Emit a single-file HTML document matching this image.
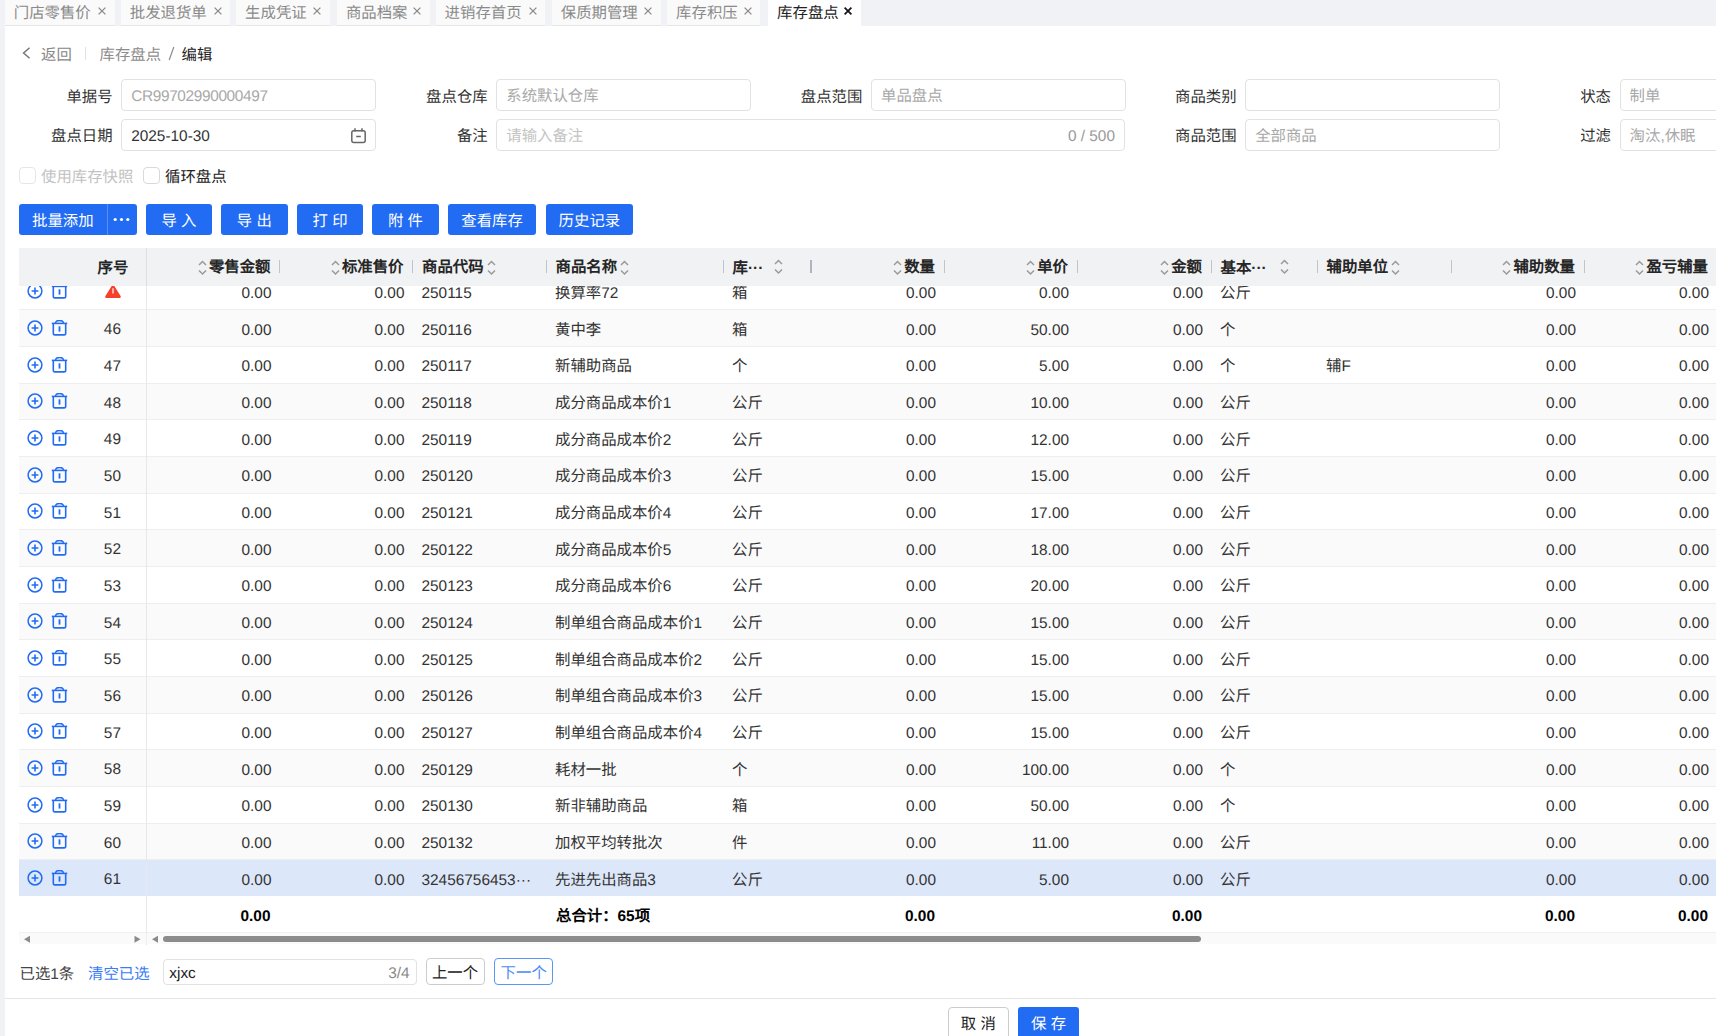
<!DOCTYPE html><html lang="zh-CN"><head><meta charset="utf-8"><style>
*{box-sizing:border-box;margin:0;padding:0}
html,body{width:1716px;height:1036px;overflow:hidden}
body{background:#f0f2f5;font-family:"Liberation Sans", sans-serif;font-size:15.4px;color:#333;position:relative;text-rendering:geometricPrecision}
.a{position:absolute;white-space:nowrap}
.tab{position:absolute;top:0;height:25.5px;background:#fafafa;border-bottom:1px solid #e6e6e6;color:#8a8a8a;line-height:27px;padding-left:8.8px}
.tab .x{position:absolute;right:8.5px;top:6.8px;width:8px;height:8px;line-height:0}
.panel{position:absolute;left:5px;top:25.5px;width:1711px;height:1010.5px;background:#fff}
.lbl{position:absolute;color:#333;line-height:35px;text-align:right}
.inp{position:absolute;height:31.3px;border:1px solid #e2e2e2;border-radius:4px;background:#fff;color:#a8a8a8;line-height:34.5px;padding-left:9px}
.btn{position:absolute;top:204px;height:31px;background:#226cf3;color:#fff;border-radius:3px;line-height:36px;text-align:center}
.cell{position:absolute;white-space:nowrap;line-height:20px;font-size:15.4px}
.r{text-align:right}
.hd{font-weight:bold;color:#262626;font-size:15.4px}
</style></head><body>
<div class="tab" style="left:5px;width:109.7px">门店零售价<span class="x"><svg width="8" height="8" viewBox="0 0 8 8"><path d="M0.6 0.6L7.4 7.4M7.4 0.6L0.6 7.4" stroke="#8a8a8a" stroke-width="1.3"/></svg></span></div>
<div class="tab" style="left:121px;width:109px">批发退货单<span class="x"><svg width="8" height="8" viewBox="0 0 8 8"><path d="M0.6 0.6L7.4 7.4M7.4 0.6L0.6 7.4" stroke="#8a8a8a" stroke-width="1.3"/></svg></span></div>
<div class="tab" style="left:236.3px;width:93.30000000000001px">生成凭证<span class="x"><svg width="8" height="8" viewBox="0 0 8 8"><path d="M0.6 0.6L7.4 7.4M7.4 0.6L0.6 7.4" stroke="#8a8a8a" stroke-width="1.3"/></svg></span></div>
<div class="tab" style="left:337.1px;width:92.89999999999998px">商品档案<span class="x"><svg width="8" height="8" viewBox="0 0 8 8"><path d="M0.6 0.6L7.4 7.4M7.4 0.6L0.6 7.4" stroke="#8a8a8a" stroke-width="1.3"/></svg></span></div>
<div class="tab" style="left:435.8px;width:109.59999999999997px">进销存首页<span class="x"><svg width="8" height="8" viewBox="0 0 8 8"><path d="M0.6 0.6L7.4 7.4M7.4 0.6L0.6 7.4" stroke="#8a8a8a" stroke-width="1.3"/></svg></span></div>
<div class="tab" style="left:552px;width:108.79999999999995px">保质期管理<span class="x"><svg width="8" height="8" viewBox="0 0 8 8"><path d="M0.6 0.6L7.4 7.4M7.4 0.6L0.6 7.4" stroke="#8a8a8a" stroke-width="1.3"/></svg></span></div>
<div class="tab" style="left:667.3px;width:93.10000000000002px">库存积压<span class="x"><svg width="8" height="8" viewBox="0 0 8 8"><path d="M0.6 0.6L7.4 7.4M7.4 0.6L0.6 7.4" stroke="#8a8a8a" stroke-width="1.3"/></svg></span></div>
<div class="tab" style="left:768.3px;width:92.6px;background:#fff;border-bottom:none;color:#222">库存盘点<span class="x"><svg width="8" height="8" viewBox="0 0 8 8"><path d="M0.6 0.6L7.4 7.4M7.4 0.6L0.6 7.4" stroke="#111" stroke-width="1.7"/></svg></span></div>
<div class="panel"></div>
<svg class="a" style="left:22px;top:47px" width="9" height="12" viewBox="0 0 9 12"><path d="M7.6 0.8 L1.6 6 L7.6 11.2" fill="none" stroke="#777" stroke-width="1.5"/></svg>
<div class="a" style="left:41px;top:45.5px;line-height:20px;color:#888">返回</div>
<div class="a" style="left:85.3px;top:47px;width:1px;height:13px;background:#e2e2e2"></div>
<div class="a" style="left:99.5px;top:45.5px;line-height:20px;color:#8c8c8c">库存盘点</div>
<svg class="a" style="left:167px;top:46px" width="9" height="15" viewBox="0 0 9 15"><path d="M6.8 1 L2.2 14" stroke="#8c8c8c" stroke-width="1.2"/></svg>
<div class="a" style="left:181.5px;top:45.5px;line-height:20px;color:#222;font-weight:500">编辑</div>
<div class="lbl" style="left:-87.39999999999999px;width:200px;top:79.7px">单据号</div>
<div class="inp" style="left:121.2px;top:79.4px;width:254.5px"><span style="letter-spacing:-0.35px">CR99702990000497</span></div>
<div class="lbl" style="left:287.70000000000005px;width:200px;top:79.7px">盘点仓库</div>
<div class="inp" style="left:496.3px;top:79.4px;width:254.5px">系统默认仓库</div>
<div class="lbl" style="left:662.4px;width:200px;top:79.7px">盘点范围</div>
<div class="inp" style="left:871px;top:79.4px;width:254.5px">单品盘点</div>
<div class="lbl" style="left:1036.6000000000001px;width:200px;top:79.7px">商品类别</div>
<div class="inp" style="left:1245.2px;top:79.4px;width:254.5px"></div>
<div class="lbl" style="left:1411.0px;width:200px;top:79.7px">状态</div>
<div class="inp" style="left:1619.6px;top:79.4px;width:254.5px">制单</div>
<div class="lbl" style="left:-87.39999999999999px;width:200px;top:119.4px">盘点日期</div>
<div class="inp" style="left:121.2px;top:119.4px;width:254.5px;color:#333">2025-10-30</div>
<svg class="a" style="left:350px;top:126.5px" width="17" height="17" viewBox="0 0 17 17"><rect x="1.8" y="3.8" width="13.4" height="11.6" rx="2" fill="none" stroke="#666" stroke-width="1.5"/><path d="M5 1.2V4.5M12 1.2V4.5M6.2 9.5H10.8" stroke="#666" stroke-width="1.5" fill="none"/></svg>
<div class="lbl" style="left:287.70000000000005px;width:200px;top:119.4px">备注</div>
<div class="inp" style="left:496.3px;top:119.4px;width:628.7px;color:#c4c4c4">请输入备注<span style="position:absolute;right:9px;color:#999">0 / 500</span></div>
<div class="lbl" style="left:1036.6000000000001px;width:200px;top:119.4px">商品范围</div>
<div class="inp" style="left:1245.2px;top:119.4px;width:254.5px">全部商品</div>
<div class="lbl" style="left:1411.0px;width:200px;top:119.4px">过滤</div>
<div class="inp" style="left:1619.6px;top:119.4px;width:254.5px">淘汰,休眠</div>
<div class="a" style="left:19.3px;top:167px;width:17px;height:17px;border:1px solid #e6e6e6;border-radius:4px;background:#fff"></div>
<div class="a" style="left:41px;top:168px;line-height:20px;color:#c2c2c2">使用库存快照</div>
<div class="a" style="left:143.4px;top:167px;width:17px;height:17px;border:1px solid #d9d9d9;border-radius:4px;background:#fff"></div>
<div class="a" style="left:165px;top:168px;line-height:20px;color:#222">循环盘点</div>
<div class="btn" style="left:19px;width:117.7px;text-align:left;padding-left:13px">批量添加</div>
<div class="a" style="left:106.6px;top:204px;width:1px;height:31px;background:#5b8ff5"></div>
<svg class="a" style="left:113px;top:217px" width="17" height="5" viewBox="0 0 17 5"><circle cx="2.2" cy="2.5" r="1.6" fill="#fff"/><circle cx="8.5" cy="2.5" r="1.6" fill="#fff"/><circle cx="14.8" cy="2.5" r="1.6" fill="#fff"/></svg>
<div class="btn" style="left:146px;width:65.9px">导 入</div>
<div class="btn" style="left:221.2px;width:66.40000000000003px">导 出</div>
<div class="btn" style="left:297px;width:66.10000000000002px">打 印</div>
<div class="btn" style="left:372.2px;width:66.5px">附 件</div>
<div class="btn" style="left:447.9px;width:88.30000000000007px">查看库存</div>
<div class="btn" style="left:545.7px;width:87.39999999999998px">历史记录</div>
<div class="a" style="left:19px;top:286px;width:1697px;height:610.3px;overflow:hidden">
<div class="a" style="left:0;top:-12.399999999999977px;width:1697px;height:36.67px;background:#fff;border-bottom:1px solid #eeeeee"></div>
<div class="a" style="left:8.399999999999999px;top:-2.5649999999999773px;line-height:0"><svg width="16" height="16" viewBox="0 0 16 16"><circle cx="8" cy="8" r="6.9" fill="none" stroke="#226cf3" stroke-width="1.5"/><path d="M8 4.6V11.4M4.6 8H11.4" stroke="#226cf3" stroke-width="1.6"/></svg></div>
<div class="a" style="left:32px;top:-2.5649999999999773px;line-height:0"><svg width="17" height="16" viewBox="0 0 17 16"><path d="M0.8 3.4H16.2" stroke="#226cf3" stroke-width="1.6"/><path d="M4.6 3.4V3.1Q4.6 0.4 8.5 0.4Q12.4 0.4 12.4 3.1V3.4" fill="none" stroke="#226cf3" stroke-width="1.5"/><path d="M2.3 3.4V13.2Q2.3 14.9 4 14.9H13Q14.7 14.9 14.7 13.2V3.4" fill="none" stroke="#226cf3" stroke-width="1.6"/><path d="M8.5 6.3V11.6" stroke="#226cf3" stroke-width="1.8"/></svg></div>
<div class="a" style="left:85.5px;top:-1.7649999999999766px;line-height:0"><svg width="16" height="14" viewBox="0 0 16 14"><path d="M8 1.2 L15 12.4 Q15.4 13.4 14.3 13.4 H1.7 Q0.6 13.4 1 12.4 Z" fill="#f5402c" stroke="#f5402c" stroke-width="1.4" stroke-linejoin="round"/><path d="M8 4.2V9.4" stroke="#fff" stroke-width="1.2"/></svg></div>
<div class="cell r" style="left:132.5px;width:120px;top:-1.9649999999999768px">0.00</div>
<div class="cell r" style="left:265.5px;width:120px;top:-1.9649999999999768px">0.00</div>
<div class="cell" style="left:402.5px;top:-1.9649999999999768px">250115</div>
<div class="cell" style="left:536px;top:-2.0649999999999764px">换算率72</div>
<div class="cell" style="left:713px;top:-2.0649999999999764px">箱</div>
<div class="cell r" style="left:797px;width:120px;top:-1.9649999999999768px">0.00</div>
<div class="cell r" style="left:930px;width:120px;top:-1.9649999999999768px">0.00</div>
<div class="cell r" style="left:1064px;width:120px;top:-1.9649999999999768px">0.00</div>
<div class="cell" style="left:1201px;top:-2.0649999999999764px">公斤</div>
<div class="cell" style="left:1307px;top:-1.9649999999999768px"></div>
<div class="cell r" style="left:1437px;width:120px;top:-1.9649999999999768px">0.00</div>
<div class="cell r" style="left:1570px;width:120px;top:-1.9649999999999768px">0.00</div>
<div class="a" style="left:0;top:24.27000000000004px;width:1697px;height:36.67px;background:#fafafa;border-bottom:1px solid #eeeeee"></div>
<div class="a" style="left:8.399999999999999px;top:34.10500000000003px;line-height:0"><svg width="16" height="16" viewBox="0 0 16 16"><circle cx="8" cy="8" r="6.9" fill="none" stroke="#226cf3" stroke-width="1.5"/><path d="M8 4.6V11.4M4.6 8H11.4" stroke="#226cf3" stroke-width="1.6"/></svg></div>
<div class="a" style="left:32px;top:34.10500000000003px;line-height:0"><svg width="17" height="16" viewBox="0 0 17 16"><path d="M0.8 3.4H16.2" stroke="#226cf3" stroke-width="1.6"/><path d="M4.6 3.4V3.1Q4.6 0.4 8.5 0.4Q12.4 0.4 12.4 3.1V3.4" fill="none" stroke="#226cf3" stroke-width="1.5"/><path d="M2.3 3.4V13.2Q2.3 14.9 4 14.9H13Q14.7 14.9 14.7 13.2V3.4" fill="none" stroke="#226cf3" stroke-width="1.6"/><path d="M8.5 6.3V11.6" stroke="#226cf3" stroke-width="1.8"/></svg></div>
<div class="cell" style="left:63.400000000000006px;width:60px;text-align:center;top:34.305000000000035px">46</div>
<div class="cell r" style="left:132.5px;width:120px;top:34.705000000000034px">0.00</div>
<div class="cell r" style="left:265.5px;width:120px;top:34.705000000000034px">0.00</div>
<div class="cell" style="left:402.5px;top:34.705000000000034px">250116</div>
<div class="cell" style="left:536px;top:34.60500000000004px">黄中李</div>
<div class="cell" style="left:713px;top:34.60500000000004px">箱</div>
<div class="cell r" style="left:797px;width:120px;top:34.705000000000034px">0.00</div>
<div class="cell r" style="left:930px;width:120px;top:34.705000000000034px">50.00</div>
<div class="cell r" style="left:1064px;width:120px;top:34.705000000000034px">0.00</div>
<div class="cell" style="left:1201px;top:34.60500000000004px">个</div>
<div class="cell" style="left:1307px;top:34.705000000000034px"></div>
<div class="cell r" style="left:1437px;width:120px;top:34.705000000000034px">0.00</div>
<div class="cell r" style="left:1570px;width:120px;top:34.705000000000034px">0.00</div>
<div class="a" style="left:0;top:60.940000000000055px;width:1697px;height:36.67px;background:#fff;border-bottom:1px solid #eeeeee"></div>
<div class="a" style="left:8.399999999999999px;top:70.77500000000006px;line-height:0"><svg width="16" height="16" viewBox="0 0 16 16"><circle cx="8" cy="8" r="6.9" fill="none" stroke="#226cf3" stroke-width="1.5"/><path d="M8 4.6V11.4M4.6 8H11.4" stroke="#226cf3" stroke-width="1.6"/></svg></div>
<div class="a" style="left:32px;top:70.77500000000006px;line-height:0"><svg width="17" height="16" viewBox="0 0 17 16"><path d="M0.8 3.4H16.2" stroke="#226cf3" stroke-width="1.6"/><path d="M4.6 3.4V3.1Q4.6 0.4 8.5 0.4Q12.4 0.4 12.4 3.1V3.4" fill="none" stroke="#226cf3" stroke-width="1.5"/><path d="M2.3 3.4V13.2Q2.3 14.9 4 14.9H13Q14.7 14.9 14.7 13.2V3.4" fill="none" stroke="#226cf3" stroke-width="1.6"/><path d="M8.5 6.3V11.6" stroke="#226cf3" stroke-width="1.8"/></svg></div>
<div class="cell" style="left:63.400000000000006px;width:60px;text-align:center;top:70.97500000000007px">47</div>
<div class="cell r" style="left:132.5px;width:120px;top:71.37500000000006px">0.00</div>
<div class="cell r" style="left:265.5px;width:120px;top:71.37500000000006px">0.00</div>
<div class="cell" style="left:402.5px;top:71.37500000000006px">250117</div>
<div class="cell" style="left:536px;top:71.27500000000006px">新辅助商品</div>
<div class="cell" style="left:713px;top:71.27500000000006px">个</div>
<div class="cell r" style="left:797px;width:120px;top:71.37500000000006px">0.00</div>
<div class="cell r" style="left:930px;width:120px;top:71.37500000000006px">5.00</div>
<div class="cell r" style="left:1064px;width:120px;top:71.37500000000006px">0.00</div>
<div class="cell" style="left:1201px;top:71.27500000000006px">个</div>
<div class="cell" style="left:1307px;top:71.27500000000006px">辅F</div>
<div class="cell r" style="left:1437px;width:120px;top:71.37500000000006px">0.00</div>
<div class="cell r" style="left:1570px;width:120px;top:71.37500000000006px">0.00</div>
<div class="a" style="left:0;top:97.61000000000001px;width:1697px;height:36.67px;background:#fafafa;border-bottom:1px solid #eeeeee"></div>
<div class="a" style="left:8.399999999999999px;top:107.44500000000002px;line-height:0"><svg width="16" height="16" viewBox="0 0 16 16"><circle cx="8" cy="8" r="6.9" fill="none" stroke="#226cf3" stroke-width="1.5"/><path d="M8 4.6V11.4M4.6 8H11.4" stroke="#226cf3" stroke-width="1.6"/></svg></div>
<div class="a" style="left:32px;top:107.44500000000002px;line-height:0"><svg width="17" height="16" viewBox="0 0 17 16"><path d="M0.8 3.4H16.2" stroke="#226cf3" stroke-width="1.6"/><path d="M4.6 3.4V3.1Q4.6 0.4 8.5 0.4Q12.4 0.4 12.4 3.1V3.4" fill="none" stroke="#226cf3" stroke-width="1.5"/><path d="M2.3 3.4V13.2Q2.3 14.9 4 14.9H13Q14.7 14.9 14.7 13.2V3.4" fill="none" stroke="#226cf3" stroke-width="1.6"/><path d="M8.5 6.3V11.6" stroke="#226cf3" stroke-width="1.8"/></svg></div>
<div class="cell" style="left:63.400000000000006px;width:60px;text-align:center;top:107.64500000000002px">48</div>
<div class="cell r" style="left:132.5px;width:120px;top:108.04500000000002px">0.00</div>
<div class="cell r" style="left:265.5px;width:120px;top:108.04500000000002px">0.00</div>
<div class="cell" style="left:402.5px;top:108.04500000000002px">250118</div>
<div class="cell" style="left:536px;top:107.94500000000002px">成分商品成本价1</div>
<div class="cell" style="left:713px;top:107.94500000000002px">公斤</div>
<div class="cell r" style="left:797px;width:120px;top:108.04500000000002px">0.00</div>
<div class="cell r" style="left:930px;width:120px;top:108.04500000000002px">10.00</div>
<div class="cell r" style="left:1064px;width:120px;top:108.04500000000002px">0.00</div>
<div class="cell" style="left:1201px;top:107.94500000000002px">公斤</div>
<div class="cell" style="left:1307px;top:108.04500000000002px"></div>
<div class="cell r" style="left:1437px;width:120px;top:108.04500000000002px">0.00</div>
<div class="cell r" style="left:1570px;width:120px;top:108.04500000000002px">0.00</div>
<div class="a" style="left:0;top:134.28000000000003px;width:1697px;height:36.67px;background:#fff;border-bottom:1px solid #eeeeee"></div>
<div class="a" style="left:8.399999999999999px;top:144.11500000000004px;line-height:0"><svg width="16" height="16" viewBox="0 0 16 16"><circle cx="8" cy="8" r="6.9" fill="none" stroke="#226cf3" stroke-width="1.5"/><path d="M8 4.6V11.4M4.6 8H11.4" stroke="#226cf3" stroke-width="1.6"/></svg></div>
<div class="a" style="left:32px;top:144.11500000000004px;line-height:0"><svg width="17" height="16" viewBox="0 0 17 16"><path d="M0.8 3.4H16.2" stroke="#226cf3" stroke-width="1.6"/><path d="M4.6 3.4V3.1Q4.6 0.4 8.5 0.4Q12.4 0.4 12.4 3.1V3.4" fill="none" stroke="#226cf3" stroke-width="1.5"/><path d="M2.3 3.4V13.2Q2.3 14.9 4 14.9H13Q14.7 14.9 14.7 13.2V3.4" fill="none" stroke="#226cf3" stroke-width="1.6"/><path d="M8.5 6.3V11.6" stroke="#226cf3" stroke-width="1.8"/></svg></div>
<div class="cell" style="left:63.400000000000006px;width:60px;text-align:center;top:144.31500000000005px">49</div>
<div class="cell r" style="left:132.5px;width:120px;top:144.71500000000006px">0.00</div>
<div class="cell r" style="left:265.5px;width:120px;top:144.71500000000006px">0.00</div>
<div class="cell" style="left:402.5px;top:144.71500000000006px">250119</div>
<div class="cell" style="left:536px;top:144.61500000000004px">成分商品成本价2</div>
<div class="cell" style="left:713px;top:144.61500000000004px">公斤</div>
<div class="cell r" style="left:797px;width:120px;top:144.71500000000006px">0.00</div>
<div class="cell r" style="left:930px;width:120px;top:144.71500000000006px">12.00</div>
<div class="cell r" style="left:1064px;width:120px;top:144.71500000000006px">0.00</div>
<div class="cell" style="left:1201px;top:144.61500000000004px">公斤</div>
<div class="cell" style="left:1307px;top:144.71500000000006px"></div>
<div class="cell r" style="left:1437px;width:120px;top:144.71500000000006px">0.00</div>
<div class="cell r" style="left:1570px;width:120px;top:144.71500000000006px">0.00</div>
<div class="a" style="left:0;top:170.95000000000005px;width:1697px;height:36.67px;background:#fafafa;border-bottom:1px solid #eeeeee"></div>
<div class="a" style="left:8.399999999999999px;top:180.78500000000005px;line-height:0"><svg width="16" height="16" viewBox="0 0 16 16"><circle cx="8" cy="8" r="6.9" fill="none" stroke="#226cf3" stroke-width="1.5"/><path d="M8 4.6V11.4M4.6 8H11.4" stroke="#226cf3" stroke-width="1.6"/></svg></div>
<div class="a" style="left:32px;top:180.78500000000005px;line-height:0"><svg width="17" height="16" viewBox="0 0 17 16"><path d="M0.8 3.4H16.2" stroke="#226cf3" stroke-width="1.6"/><path d="M4.6 3.4V3.1Q4.6 0.4 8.5 0.4Q12.4 0.4 12.4 3.1V3.4" fill="none" stroke="#226cf3" stroke-width="1.5"/><path d="M2.3 3.4V13.2Q2.3 14.9 4 14.9H13Q14.7 14.9 14.7 13.2V3.4" fill="none" stroke="#226cf3" stroke-width="1.6"/><path d="M8.5 6.3V11.6" stroke="#226cf3" stroke-width="1.8"/></svg></div>
<div class="cell" style="left:63.400000000000006px;width:60px;text-align:center;top:180.98500000000007px">50</div>
<div class="cell r" style="left:132.5px;width:120px;top:181.38500000000008px">0.00</div>
<div class="cell r" style="left:265.5px;width:120px;top:181.38500000000008px">0.00</div>
<div class="cell" style="left:402.5px;top:181.38500000000008px">250120</div>
<div class="cell" style="left:536px;top:181.28500000000005px">成分商品成本价3</div>
<div class="cell" style="left:713px;top:181.28500000000005px">公斤</div>
<div class="cell r" style="left:797px;width:120px;top:181.38500000000008px">0.00</div>
<div class="cell r" style="left:930px;width:120px;top:181.38500000000008px">15.00</div>
<div class="cell r" style="left:1064px;width:120px;top:181.38500000000008px">0.00</div>
<div class="cell" style="left:1201px;top:181.28500000000005px">公斤</div>
<div class="cell" style="left:1307px;top:181.38500000000008px"></div>
<div class="cell r" style="left:1437px;width:120px;top:181.38500000000008px">0.00</div>
<div class="cell r" style="left:1570px;width:120px;top:181.38500000000008px">0.00</div>
<div class="a" style="left:0;top:207.62px;width:1697px;height:36.67px;background:#fff;border-bottom:1px solid #eeeeee"></div>
<div class="a" style="left:8.399999999999999px;top:217.455px;line-height:0"><svg width="16" height="16" viewBox="0 0 16 16"><circle cx="8" cy="8" r="6.9" fill="none" stroke="#226cf3" stroke-width="1.5"/><path d="M8 4.6V11.4M4.6 8H11.4" stroke="#226cf3" stroke-width="1.6"/></svg></div>
<div class="a" style="left:32px;top:217.455px;line-height:0"><svg width="17" height="16" viewBox="0 0 17 16"><path d="M0.8 3.4H16.2" stroke="#226cf3" stroke-width="1.6"/><path d="M4.6 3.4V3.1Q4.6 0.4 8.5 0.4Q12.4 0.4 12.4 3.1V3.4" fill="none" stroke="#226cf3" stroke-width="1.5"/><path d="M2.3 3.4V13.2Q2.3 14.9 4 14.9H13Q14.7 14.9 14.7 13.2V3.4" fill="none" stroke="#226cf3" stroke-width="1.6"/><path d="M8.5 6.3V11.6" stroke="#226cf3" stroke-width="1.8"/></svg></div>
<div class="cell" style="left:63.400000000000006px;width:60px;text-align:center;top:217.65500000000003px">51</div>
<div class="cell r" style="left:132.5px;width:120px;top:218.05500000000004px">0.00</div>
<div class="cell r" style="left:265.5px;width:120px;top:218.05500000000004px">0.00</div>
<div class="cell" style="left:402.5px;top:218.05500000000004px">250121</div>
<div class="cell" style="left:536px;top:217.955px">成分商品成本价4</div>
<div class="cell" style="left:713px;top:217.955px">公斤</div>
<div class="cell r" style="left:797px;width:120px;top:218.05500000000004px">0.00</div>
<div class="cell r" style="left:930px;width:120px;top:218.05500000000004px">17.00</div>
<div class="cell r" style="left:1064px;width:120px;top:218.05500000000004px">0.00</div>
<div class="cell" style="left:1201px;top:217.955px">公斤</div>
<div class="cell" style="left:1307px;top:218.05500000000004px"></div>
<div class="cell r" style="left:1437px;width:120px;top:218.05500000000004px">0.00</div>
<div class="cell r" style="left:1570px;width:120px;top:218.05500000000004px">0.00</div>
<div class="a" style="left:0;top:244.28999999999996px;width:1697px;height:36.67px;background:#fafafa;border-bottom:1px solid #eeeeee"></div>
<div class="a" style="left:8.399999999999999px;top:254.12499999999994px;line-height:0"><svg width="16" height="16" viewBox="0 0 16 16"><circle cx="8" cy="8" r="6.9" fill="none" stroke="#226cf3" stroke-width="1.5"/><path d="M8 4.6V11.4M4.6 8H11.4" stroke="#226cf3" stroke-width="1.6"/></svg></div>
<div class="a" style="left:32px;top:254.12499999999994px;line-height:0"><svg width="17" height="16" viewBox="0 0 17 16"><path d="M0.8 3.4H16.2" stroke="#226cf3" stroke-width="1.6"/><path d="M4.6 3.4V3.1Q4.6 0.4 8.5 0.4Q12.4 0.4 12.4 3.1V3.4" fill="none" stroke="#226cf3" stroke-width="1.5"/><path d="M2.3 3.4V13.2Q2.3 14.9 4 14.9H13Q14.7 14.9 14.7 13.2V3.4" fill="none" stroke="#226cf3" stroke-width="1.6"/><path d="M8.5 6.3V11.6" stroke="#226cf3" stroke-width="1.8"/></svg></div>
<div class="cell" style="left:63.400000000000006px;width:60px;text-align:center;top:254.32499999999996px">52</div>
<div class="cell r" style="left:132.5px;width:120px;top:254.72499999999997px">0.00</div>
<div class="cell r" style="left:265.5px;width:120px;top:254.72499999999997px">0.00</div>
<div class="cell" style="left:402.5px;top:254.72499999999997px">250122</div>
<div class="cell" style="left:536px;top:254.62499999999994px">成分商品成本价5</div>
<div class="cell" style="left:713px;top:254.62499999999994px">公斤</div>
<div class="cell r" style="left:797px;width:120px;top:254.72499999999997px">0.00</div>
<div class="cell r" style="left:930px;width:120px;top:254.72499999999997px">18.00</div>
<div class="cell r" style="left:1064px;width:120px;top:254.72499999999997px">0.00</div>
<div class="cell" style="left:1201px;top:254.62499999999994px">公斤</div>
<div class="cell" style="left:1307px;top:254.72499999999997px"></div>
<div class="cell r" style="left:1437px;width:120px;top:254.72499999999997px">0.00</div>
<div class="cell r" style="left:1570px;width:120px;top:254.72499999999997px">0.00</div>
<div class="a" style="left:0;top:280.96000000000004px;width:1697px;height:36.67px;background:#fff;border-bottom:1px solid #eeeeee"></div>
<div class="a" style="left:8.399999999999999px;top:290.795px;line-height:0"><svg width="16" height="16" viewBox="0 0 16 16"><circle cx="8" cy="8" r="6.9" fill="none" stroke="#226cf3" stroke-width="1.5"/><path d="M8 4.6V11.4M4.6 8H11.4" stroke="#226cf3" stroke-width="1.6"/></svg></div>
<div class="a" style="left:32px;top:290.795px;line-height:0"><svg width="17" height="16" viewBox="0 0 17 16"><path d="M0.8 3.4H16.2" stroke="#226cf3" stroke-width="1.6"/><path d="M4.6 3.4V3.1Q4.6 0.4 8.5 0.4Q12.4 0.4 12.4 3.1V3.4" fill="none" stroke="#226cf3" stroke-width="1.5"/><path d="M2.3 3.4V13.2Q2.3 14.9 4 14.9H13Q14.7 14.9 14.7 13.2V3.4" fill="none" stroke="#226cf3" stroke-width="1.6"/><path d="M8.5 6.3V11.6" stroke="#226cf3" stroke-width="1.8"/></svg></div>
<div class="cell" style="left:63.400000000000006px;width:60px;text-align:center;top:290.995px">53</div>
<div class="cell r" style="left:132.5px;width:120px;top:291.39500000000004px">0.00</div>
<div class="cell r" style="left:265.5px;width:120px;top:291.39500000000004px">0.00</div>
<div class="cell" style="left:402.5px;top:291.39500000000004px">250123</div>
<div class="cell" style="left:536px;top:291.295px">成分商品成本价6</div>
<div class="cell" style="left:713px;top:291.295px">公斤</div>
<div class="cell r" style="left:797px;width:120px;top:291.39500000000004px">0.00</div>
<div class="cell r" style="left:930px;width:120px;top:291.39500000000004px">20.00</div>
<div class="cell r" style="left:1064px;width:120px;top:291.39500000000004px">0.00</div>
<div class="cell" style="left:1201px;top:291.295px">公斤</div>
<div class="cell" style="left:1307px;top:291.39500000000004px"></div>
<div class="cell r" style="left:1437px;width:120px;top:291.39500000000004px">0.00</div>
<div class="cell r" style="left:1570px;width:120px;top:291.39500000000004px">0.00</div>
<div class="a" style="left:0;top:317.6300000000001px;width:1697px;height:36.67px;background:#fafafa;border-bottom:1px solid #eeeeee"></div>
<div class="a" style="left:8.399999999999999px;top:327.4650000000001px;line-height:0"><svg width="16" height="16" viewBox="0 0 16 16"><circle cx="8" cy="8" r="6.9" fill="none" stroke="#226cf3" stroke-width="1.5"/><path d="M8 4.6V11.4M4.6 8H11.4" stroke="#226cf3" stroke-width="1.6"/></svg></div>
<div class="a" style="left:32px;top:327.4650000000001px;line-height:0"><svg width="17" height="16" viewBox="0 0 17 16"><path d="M0.8 3.4H16.2" stroke="#226cf3" stroke-width="1.6"/><path d="M4.6 3.4V3.1Q4.6 0.4 8.5 0.4Q12.4 0.4 12.4 3.1V3.4" fill="none" stroke="#226cf3" stroke-width="1.5"/><path d="M2.3 3.4V13.2Q2.3 14.9 4 14.9H13Q14.7 14.9 14.7 13.2V3.4" fill="none" stroke="#226cf3" stroke-width="1.6"/><path d="M8.5 6.3V11.6" stroke="#226cf3" stroke-width="1.8"/></svg></div>
<div class="cell" style="left:63.400000000000006px;width:60px;text-align:center;top:327.6650000000001px">54</div>
<div class="cell r" style="left:132.5px;width:120px;top:328.0650000000001px">0.00</div>
<div class="cell r" style="left:265.5px;width:120px;top:328.0650000000001px">0.00</div>
<div class="cell" style="left:402.5px;top:328.0650000000001px">250124</div>
<div class="cell" style="left:536px;top:327.9650000000001px">制单组合商品成本价1</div>
<div class="cell" style="left:713px;top:327.9650000000001px">公斤</div>
<div class="cell r" style="left:797px;width:120px;top:328.0650000000001px">0.00</div>
<div class="cell r" style="left:930px;width:120px;top:328.0650000000001px">15.00</div>
<div class="cell r" style="left:1064px;width:120px;top:328.0650000000001px">0.00</div>
<div class="cell" style="left:1201px;top:327.9650000000001px">公斤</div>
<div class="cell" style="left:1307px;top:328.0650000000001px"></div>
<div class="cell r" style="left:1437px;width:120px;top:328.0650000000001px">0.00</div>
<div class="cell r" style="left:1570px;width:120px;top:328.0650000000001px">0.00</div>
<div class="a" style="left:0;top:354.30000000000007px;width:1697px;height:36.67px;background:#fff;border-bottom:1px solid #eeeeee"></div>
<div class="a" style="left:8.399999999999999px;top:364.13500000000005px;line-height:0"><svg width="16" height="16" viewBox="0 0 16 16"><circle cx="8" cy="8" r="6.9" fill="none" stroke="#226cf3" stroke-width="1.5"/><path d="M8 4.6V11.4M4.6 8H11.4" stroke="#226cf3" stroke-width="1.6"/></svg></div>
<div class="a" style="left:32px;top:364.13500000000005px;line-height:0"><svg width="17" height="16" viewBox="0 0 17 16"><path d="M0.8 3.4H16.2" stroke="#226cf3" stroke-width="1.6"/><path d="M4.6 3.4V3.1Q4.6 0.4 8.5 0.4Q12.4 0.4 12.4 3.1V3.4" fill="none" stroke="#226cf3" stroke-width="1.5"/><path d="M2.3 3.4V13.2Q2.3 14.9 4 14.9H13Q14.7 14.9 14.7 13.2V3.4" fill="none" stroke="#226cf3" stroke-width="1.6"/><path d="M8.5 6.3V11.6" stroke="#226cf3" stroke-width="1.8"/></svg></div>
<div class="cell" style="left:63.400000000000006px;width:60px;text-align:center;top:364.33500000000004px">55</div>
<div class="cell r" style="left:132.5px;width:120px;top:364.73500000000007px">0.00</div>
<div class="cell r" style="left:265.5px;width:120px;top:364.73500000000007px">0.00</div>
<div class="cell" style="left:402.5px;top:364.73500000000007px">250125</div>
<div class="cell" style="left:536px;top:364.63500000000005px">制单组合商品成本价2</div>
<div class="cell" style="left:713px;top:364.63500000000005px">公斤</div>
<div class="cell r" style="left:797px;width:120px;top:364.73500000000007px">0.00</div>
<div class="cell r" style="left:930px;width:120px;top:364.73500000000007px">15.00</div>
<div class="cell r" style="left:1064px;width:120px;top:364.73500000000007px">0.00</div>
<div class="cell" style="left:1201px;top:364.63500000000005px">公斤</div>
<div class="cell" style="left:1307px;top:364.73500000000007px"></div>
<div class="cell r" style="left:1437px;width:120px;top:364.73500000000007px">0.00</div>
<div class="cell r" style="left:1570px;width:120px;top:364.73500000000007px">0.00</div>
<div class="a" style="left:0;top:390.97px;width:1697px;height:36.67px;background:#fafafa;border-bottom:1px solid #eeeeee"></div>
<div class="a" style="left:8.399999999999999px;top:400.805px;line-height:0"><svg width="16" height="16" viewBox="0 0 16 16"><circle cx="8" cy="8" r="6.9" fill="none" stroke="#226cf3" stroke-width="1.5"/><path d="M8 4.6V11.4M4.6 8H11.4" stroke="#226cf3" stroke-width="1.6"/></svg></div>
<div class="a" style="left:32px;top:400.805px;line-height:0"><svg width="17" height="16" viewBox="0 0 17 16"><path d="M0.8 3.4H16.2" stroke="#226cf3" stroke-width="1.6"/><path d="M4.6 3.4V3.1Q4.6 0.4 8.5 0.4Q12.4 0.4 12.4 3.1V3.4" fill="none" stroke="#226cf3" stroke-width="1.5"/><path d="M2.3 3.4V13.2Q2.3 14.9 4 14.9H13Q14.7 14.9 14.7 13.2V3.4" fill="none" stroke="#226cf3" stroke-width="1.6"/><path d="M8.5 6.3V11.6" stroke="#226cf3" stroke-width="1.8"/></svg></div>
<div class="cell" style="left:63.400000000000006px;width:60px;text-align:center;top:401.005px">56</div>
<div class="cell r" style="left:132.5px;width:120px;top:401.40500000000003px">0.00</div>
<div class="cell r" style="left:265.5px;width:120px;top:401.40500000000003px">0.00</div>
<div class="cell" style="left:402.5px;top:401.40500000000003px">250126</div>
<div class="cell" style="left:536px;top:401.305px">制单组合商品成本价3</div>
<div class="cell" style="left:713px;top:401.305px">公斤</div>
<div class="cell r" style="left:797px;width:120px;top:401.40500000000003px">0.00</div>
<div class="cell r" style="left:930px;width:120px;top:401.40500000000003px">15.00</div>
<div class="cell r" style="left:1064px;width:120px;top:401.40500000000003px">0.00</div>
<div class="cell" style="left:1201px;top:401.305px">公斤</div>
<div class="cell" style="left:1307px;top:401.40500000000003px"></div>
<div class="cell r" style="left:1437px;width:120px;top:401.40500000000003px">0.00</div>
<div class="cell r" style="left:1570px;width:120px;top:401.40500000000003px">0.00</div>
<div class="a" style="left:0;top:427.6400000000001px;width:1697px;height:36.67px;background:#fff;border-bottom:1px solid #eeeeee"></div>
<div class="a" style="left:8.399999999999999px;top:437.4750000000001px;line-height:0"><svg width="16" height="16" viewBox="0 0 16 16"><circle cx="8" cy="8" r="6.9" fill="none" stroke="#226cf3" stroke-width="1.5"/><path d="M8 4.6V11.4M4.6 8H11.4" stroke="#226cf3" stroke-width="1.6"/></svg></div>
<div class="a" style="left:32px;top:437.4750000000001px;line-height:0"><svg width="17" height="16" viewBox="0 0 17 16"><path d="M0.8 3.4H16.2" stroke="#226cf3" stroke-width="1.6"/><path d="M4.6 3.4V3.1Q4.6 0.4 8.5 0.4Q12.4 0.4 12.4 3.1V3.4" fill="none" stroke="#226cf3" stroke-width="1.5"/><path d="M2.3 3.4V13.2Q2.3 14.9 4 14.9H13Q14.7 14.9 14.7 13.2V3.4" fill="none" stroke="#226cf3" stroke-width="1.6"/><path d="M8.5 6.3V11.6" stroke="#226cf3" stroke-width="1.8"/></svg></div>
<div class="cell" style="left:63.400000000000006px;width:60px;text-align:center;top:437.67500000000007px">57</div>
<div class="cell r" style="left:132.5px;width:120px;top:438.0750000000001px">0.00</div>
<div class="cell r" style="left:265.5px;width:120px;top:438.0750000000001px">0.00</div>
<div class="cell" style="left:402.5px;top:438.0750000000001px">250127</div>
<div class="cell" style="left:536px;top:437.9750000000001px">制单组合商品成本价4</div>
<div class="cell" style="left:713px;top:437.9750000000001px">公斤</div>
<div class="cell r" style="left:797px;width:120px;top:438.0750000000001px">0.00</div>
<div class="cell r" style="left:930px;width:120px;top:438.0750000000001px">15.00</div>
<div class="cell r" style="left:1064px;width:120px;top:438.0750000000001px">0.00</div>
<div class="cell" style="left:1201px;top:437.9750000000001px">公斤</div>
<div class="cell" style="left:1307px;top:438.0750000000001px"></div>
<div class="cell r" style="left:1437px;width:120px;top:438.0750000000001px">0.00</div>
<div class="cell r" style="left:1570px;width:120px;top:438.0750000000001px">0.00</div>
<div class="a" style="left:0;top:464.31000000000006px;width:1697px;height:36.67px;background:#fafafa;border-bottom:1px solid #eeeeee"></div>
<div class="a" style="left:8.399999999999999px;top:474.14500000000004px;line-height:0"><svg width="16" height="16" viewBox="0 0 16 16"><circle cx="8" cy="8" r="6.9" fill="none" stroke="#226cf3" stroke-width="1.5"/><path d="M8 4.6V11.4M4.6 8H11.4" stroke="#226cf3" stroke-width="1.6"/></svg></div>
<div class="a" style="left:32px;top:474.14500000000004px;line-height:0"><svg width="17" height="16" viewBox="0 0 17 16"><path d="M0.8 3.4H16.2" stroke="#226cf3" stroke-width="1.6"/><path d="M4.6 3.4V3.1Q4.6 0.4 8.5 0.4Q12.4 0.4 12.4 3.1V3.4" fill="none" stroke="#226cf3" stroke-width="1.5"/><path d="M2.3 3.4V13.2Q2.3 14.9 4 14.9H13Q14.7 14.9 14.7 13.2V3.4" fill="none" stroke="#226cf3" stroke-width="1.6"/><path d="M8.5 6.3V11.6" stroke="#226cf3" stroke-width="1.8"/></svg></div>
<div class="cell" style="left:63.400000000000006px;width:60px;text-align:center;top:474.345px">58</div>
<div class="cell r" style="left:132.5px;width:120px;top:474.74500000000006px">0.00</div>
<div class="cell r" style="left:265.5px;width:120px;top:474.74500000000006px">0.00</div>
<div class="cell" style="left:402.5px;top:474.74500000000006px">250129</div>
<div class="cell" style="left:536px;top:474.64500000000004px">耗材一批</div>
<div class="cell" style="left:713px;top:474.64500000000004px">个</div>
<div class="cell r" style="left:797px;width:120px;top:474.74500000000006px">0.00</div>
<div class="cell r" style="left:930px;width:120px;top:474.74500000000006px">100.00</div>
<div class="cell r" style="left:1064px;width:120px;top:474.74500000000006px">0.00</div>
<div class="cell" style="left:1201px;top:474.64500000000004px">个</div>
<div class="cell" style="left:1307px;top:474.74500000000006px"></div>
<div class="cell r" style="left:1437px;width:120px;top:474.74500000000006px">0.00</div>
<div class="cell r" style="left:1570px;width:120px;top:474.74500000000006px">0.00</div>
<div class="a" style="left:0;top:500.98px;width:1697px;height:36.67px;background:#fff;border-bottom:1px solid #eeeeee"></div>
<div class="a" style="left:8.399999999999999px;top:510.815px;line-height:0"><svg width="16" height="16" viewBox="0 0 16 16"><circle cx="8" cy="8" r="6.9" fill="none" stroke="#226cf3" stroke-width="1.5"/><path d="M8 4.6V11.4M4.6 8H11.4" stroke="#226cf3" stroke-width="1.6"/></svg></div>
<div class="a" style="left:32px;top:510.815px;line-height:0"><svg width="17" height="16" viewBox="0 0 17 16"><path d="M0.8 3.4H16.2" stroke="#226cf3" stroke-width="1.6"/><path d="M4.6 3.4V3.1Q4.6 0.4 8.5 0.4Q12.4 0.4 12.4 3.1V3.4" fill="none" stroke="#226cf3" stroke-width="1.5"/><path d="M2.3 3.4V13.2Q2.3 14.9 4 14.9H13Q14.7 14.9 14.7 13.2V3.4" fill="none" stroke="#226cf3" stroke-width="1.6"/><path d="M8.5 6.3V11.6" stroke="#226cf3" stroke-width="1.8"/></svg></div>
<div class="cell" style="left:63.400000000000006px;width:60px;text-align:center;top:511.015px">59</div>
<div class="cell r" style="left:132.5px;width:120px;top:511.415px">0.00</div>
<div class="cell r" style="left:265.5px;width:120px;top:511.415px">0.00</div>
<div class="cell" style="left:402.5px;top:511.415px">250130</div>
<div class="cell" style="left:536px;top:511.315px">新非辅助商品</div>
<div class="cell" style="left:713px;top:511.315px">箱</div>
<div class="cell r" style="left:797px;width:120px;top:511.415px">0.00</div>
<div class="cell r" style="left:930px;width:120px;top:511.415px">50.00</div>
<div class="cell r" style="left:1064px;width:120px;top:511.415px">0.00</div>
<div class="cell" style="left:1201px;top:511.315px">个</div>
<div class="cell" style="left:1307px;top:511.415px"></div>
<div class="cell r" style="left:1437px;width:120px;top:511.415px">0.00</div>
<div class="cell r" style="left:1570px;width:120px;top:511.415px">0.00</div>
<div class="a" style="left:0;top:537.6500000000001px;width:1697px;height:36.67px;background:#fafafa;border-bottom:1px solid #eeeeee"></div>
<div class="a" style="left:8.399999999999999px;top:547.4850000000001px;line-height:0"><svg width="16" height="16" viewBox="0 0 16 16"><circle cx="8" cy="8" r="6.9" fill="none" stroke="#226cf3" stroke-width="1.5"/><path d="M8 4.6V11.4M4.6 8H11.4" stroke="#226cf3" stroke-width="1.6"/></svg></div>
<div class="a" style="left:32px;top:547.4850000000001px;line-height:0"><svg width="17" height="16" viewBox="0 0 17 16"><path d="M0.8 3.4H16.2" stroke="#226cf3" stroke-width="1.6"/><path d="M4.6 3.4V3.1Q4.6 0.4 8.5 0.4Q12.4 0.4 12.4 3.1V3.4" fill="none" stroke="#226cf3" stroke-width="1.5"/><path d="M2.3 3.4V13.2Q2.3 14.9 4 14.9H13Q14.7 14.9 14.7 13.2V3.4" fill="none" stroke="#226cf3" stroke-width="1.6"/><path d="M8.5 6.3V11.6" stroke="#226cf3" stroke-width="1.8"/></svg></div>
<div class="cell" style="left:63.400000000000006px;width:60px;text-align:center;top:547.6850000000001px">60</div>
<div class="cell r" style="left:132.5px;width:120px;top:548.085px">0.00</div>
<div class="cell r" style="left:265.5px;width:120px;top:548.085px">0.00</div>
<div class="cell" style="left:402.5px;top:548.085px">250132</div>
<div class="cell" style="left:536px;top:547.9850000000001px">加权平均转批次</div>
<div class="cell" style="left:713px;top:547.9850000000001px">件</div>
<div class="cell r" style="left:797px;width:120px;top:548.085px">0.00</div>
<div class="cell r" style="left:930px;width:120px;top:548.085px">11.00</div>
<div class="cell r" style="left:1064px;width:120px;top:548.085px">0.00</div>
<div class="cell" style="left:1201px;top:547.9850000000001px">公斤</div>
<div class="cell" style="left:1307px;top:548.085px"></div>
<div class="cell r" style="left:1437px;width:120px;top:548.085px">0.00</div>
<div class="cell r" style="left:1570px;width:120px;top:548.085px">0.00</div>
<div class="a" style="left:0;top:574.32px;width:1697px;height:36.67px;background:#dde7fa;border-bottom:1px solid #eeeeee"></div>
<div class="a" style="left:8.399999999999999px;top:584.1550000000001px;line-height:0"><svg width="16" height="16" viewBox="0 0 16 16"><circle cx="8" cy="8" r="6.9" fill="none" stroke="#226cf3" stroke-width="1.5"/><path d="M8 4.6V11.4M4.6 8H11.4" stroke="#226cf3" stroke-width="1.6"/></svg></div>
<div class="a" style="left:32px;top:584.1550000000001px;line-height:0"><svg width="17" height="16" viewBox="0 0 17 16"><path d="M0.8 3.4H16.2" stroke="#226cf3" stroke-width="1.6"/><path d="M4.6 3.4V3.1Q4.6 0.4 8.5 0.4Q12.4 0.4 12.4 3.1V3.4" fill="none" stroke="#226cf3" stroke-width="1.5"/><path d="M2.3 3.4V13.2Q2.3 14.9 4 14.9H13Q14.7 14.9 14.7 13.2V3.4" fill="none" stroke="#226cf3" stroke-width="1.6"/><path d="M8.5 6.3V11.6" stroke="#226cf3" stroke-width="1.8"/></svg></div>
<div class="cell" style="left:63.400000000000006px;width:60px;text-align:center;top:584.355px">61</div>
<div class="cell r" style="left:132.5px;width:120px;top:584.755px">0.00</div>
<div class="cell r" style="left:265.5px;width:120px;top:584.755px">0.00</div>
<div class="cell" style="left:402.5px;top:584.6550000000001px">32456756453···</div>
<div class="cell" style="left:536px;top:584.6550000000001px">先进先出商品3</div>
<div class="cell" style="left:713px;top:584.6550000000001px">公斤</div>
<div class="cell r" style="left:797px;width:120px;top:584.755px">0.00</div>
<div class="cell r" style="left:930px;width:120px;top:584.755px">5.00</div>
<div class="cell r" style="left:1064px;width:120px;top:584.755px">0.00</div>
<div class="cell" style="left:1201px;top:584.6550000000001px">公斤</div>
<div class="cell" style="left:1307px;top:584.755px"></div>
<div class="cell r" style="left:1437px;width:120px;top:584.755px">0.00</div>
<div class="cell r" style="left:1570px;width:120px;top:584.755px">0.00</div>
</div>
<div class="a" style="left:146px;top:248px;width:1px;height:696.5px;background:#e6e8eb"></div>
<div class="a" style="left:19px;top:248px;width:1697px;height:38px;background:#f1f2f4"></div>
<div class="a" style="left:146px;top:248px;width:1px;height:38px;background:#dcdfe4"></div>
<div class="cell hd" style="left:83px;width:60px;text-align:center;top:258.5px">序号</div>
<div class="a" style="left:70.5px;width:200px;top:248px;height:38px;display:flex;justify-content:flex-end;align-items:center"><div style="line-height:0;margin-right:2px;margin-top:1px"><svg width="9" height="16" viewBox="0 0 9 16" style="flex:none"><path d="M1 5L4.5 1.5L8 5M1 10.5L4.5 14L8 10.5" fill="none" stroke="#999" stroke-width="1.45"/></svg></div><div class="hd" style="line-height:20px;margin-top:2.5px">零售金额</div></div>
<div class="a" style="left:279.0px;top:260px;width:1.2px;height:12.5px;background:#c0c4cc"></div>
<div class="a" style="left:203.5px;width:200px;top:248px;height:38px;display:flex;justify-content:flex-end;align-items:center"><div style="line-height:0;margin-right:2px;margin-top:1px"><svg width="9" height="16" viewBox="0 0 9 16" style="flex:none"><path d="M1 5L4.5 1.5L8 5M1 10.5L4.5 14L8 10.5" fill="none" stroke="#999" stroke-width="1.45"/></svg></div><div class="hd" style="line-height:20px;margin-top:2.5px">标准售价</div></div>
<div class="a" style="left:412.0px;top:260px;width:1.2px;height:12.5px;background:#c0c4cc"></div>
<div class="a" style="left:422.0px;width:200px;top:248px;height:38px;display:flex;align-items:center"><div class="hd" style="line-height:20px;margin-top:2.5px">商品代码</div><div style="line-height:0;margin-left:3px;margin-top:1px"><svg width="9" height="16" viewBox="0 0 9 16" style="flex:none"><path d="M1 5L4.5 1.5L8 5M1 10.5L4.5 14L8 10.5" fill="none" stroke="#999" stroke-width="1.45"/></svg></div></div>
<div class="a" style="left:545.5px;top:260px;width:1.2px;height:12.5px;background:#c0c4cc"></div>
<div class="a" style="left:555.5px;width:200px;top:248px;height:38px;display:flex;align-items:center"><div class="hd" style="line-height:20px;margin-top:2.5px">商品名称</div><div style="line-height:0;margin-left:3px;margin-top:1px"><svg width="9" height="16" viewBox="0 0 9 16" style="flex:none"><path d="M1 5L4.5 1.5L8 5M1 10.5L4.5 14L8 10.5" fill="none" stroke="#999" stroke-width="1.45"/></svg></div></div>
<div class="a" style="left:722.5px;top:260px;width:1.2px;height:12.5px;background:#c0c4cc"></div>
<div class="cell hd" style="left:732.5px;top:258.5px">库···</div>
<div class="a" style="left:774px;top:259px;line-height:0"><svg width="9" height="16" viewBox="0 0 9 16" style="flex:none"><path d="M1 5L4.5 1.5L8 5M1 10.5L4.5 14L8 10.5" fill="none" stroke="#999" stroke-width="1.45"/></svg></div>
<div class="a" style="left:810.5px;top:260px;width:1.2px;height:12.5px;background:#c0c4cc"></div>
<div class="a" style="left:810.2px;top:260px;width:1.8px;height:12.5px;background:#aeb4c0"></div>
<div class="a" style="left:735px;width:200px;top:248px;height:38px;display:flex;justify-content:flex-end;align-items:center"><div style="line-height:0;margin-right:2px;margin-top:1px"><svg width="9" height="16" viewBox="0 0 9 16" style="flex:none"><path d="M1 5L4.5 1.5L8 5M1 10.5L4.5 14L8 10.5" fill="none" stroke="#999" stroke-width="1.45"/></svg></div><div class="hd" style="line-height:20px;margin-top:2.5px">数量</div></div>
<div class="a" style="left:943.5px;top:260px;width:1.2px;height:12.5px;background:#c0c4cc"></div>
<div class="a" style="left:868px;width:200px;top:248px;height:38px;display:flex;justify-content:flex-end;align-items:center"><div style="line-height:0;margin-right:2px;margin-top:1px"><svg width="9" height="16" viewBox="0 0 9 16" style="flex:none"><path d="M1 5L4.5 1.5L8 5M1 10.5L4.5 14L8 10.5" fill="none" stroke="#999" stroke-width="1.45"/></svg></div><div class="hd" style="line-height:20px;margin-top:2.5px">单价</div></div>
<div class="a" style="left:1076.5px;top:260px;width:1.2px;height:12.5px;background:#c0c4cc"></div>
<div class="a" style="left:1002px;width:200px;top:248px;height:38px;display:flex;justify-content:flex-end;align-items:center"><div style="line-height:0;margin-right:2px;margin-top:1px"><svg width="9" height="16" viewBox="0 0 9 16" style="flex:none"><path d="M1 5L4.5 1.5L8 5M1 10.5L4.5 14L8 10.5" fill="none" stroke="#999" stroke-width="1.45"/></svg></div><div class="hd" style="line-height:20px;margin-top:2.5px">金额</div></div>
<div class="a" style="left:1210.5px;top:260px;width:1.2px;height:12.5px;background:#c0c4cc"></div>
<div class="cell hd" style="left:1220.5px;top:258.5px">基本···</div>
<div class="a" style="left:1280px;top:259px;line-height:0"><svg width="9" height="16" viewBox="0 0 9 16" style="flex:none"><path d="M1 5L4.5 1.5L8 5M1 10.5L4.5 14L8 10.5" fill="none" stroke="#999" stroke-width="1.45"/></svg></div>
<div class="a" style="left:1316.5px;top:260px;width:1.2px;height:12.5px;background:#c0c4cc"></div>
<div class="a" style="left:1326.5px;width:200px;top:248px;height:38px;display:flex;align-items:center"><div class="hd" style="line-height:20px;margin-top:2.5px">辅助单位</div><div style="line-height:0;margin-left:3px;margin-top:1px"><svg width="9" height="16" viewBox="0 0 9 16" style="flex:none"><path d="M1 5L4.5 1.5L8 5M1 10.5L4.5 14L8 10.5" fill="none" stroke="#999" stroke-width="1.45"/></svg></div></div>
<div class="a" style="left:1450.5px;top:260px;width:1.2px;height:12.5px;background:#c0c4cc"></div>
<div class="a" style="left:1375px;width:200px;top:248px;height:38px;display:flex;justify-content:flex-end;align-items:center"><div style="line-height:0;margin-right:2px;margin-top:1px"><svg width="9" height="16" viewBox="0 0 9 16" style="flex:none"><path d="M1 5L4.5 1.5L8 5M1 10.5L4.5 14L8 10.5" fill="none" stroke="#999" stroke-width="1.45"/></svg></div><div class="hd" style="line-height:20px;margin-top:2.5px">辅助数量</div></div>
<div class="a" style="left:1583.5px;top:260px;width:1.2px;height:12.5px;background:#c0c4cc"></div>
<div class="a" style="left:1508px;width:200px;top:248px;height:38px;display:flex;justify-content:flex-end;align-items:center"><div style="line-height:0;margin-right:2px;margin-top:1px"><svg width="9" height="16" viewBox="0 0 9 16" style="flex:none"><path d="M1 5L4.5 1.5L8 5M1 10.5L4.5 14L8 10.5" fill="none" stroke="#999" stroke-width="1.45"/></svg></div><div class="hd" style="line-height:20px;margin-top:2.5px">盈亏辅量</div></div>
<div class="a" style="left:1716.5px;top:260px;width:1.2px;height:12.5px;background:#c0c4cc"></div>
<div class="a" style="left:545.5px;top:260px;width:1.2px;height:12.5px;background:#c0c4cc"></div>
<div class="a" style="left:722.7px;top:260px;width:1.2px;height:12.5px;background:#c0c4cc"></div>
<div class="a" style="left:19px;top:896.3px;width:1697px;height:35.90000000000009px;background:#fff"></div>
<div class="cell r hd" style="left:150.5px;width:120px;top:907.25px;color:#000">0.00</div>
<div class="cell r hd" style="left:815px;width:120px;top:907.25px;color:#000">0.00</div>
<div class="cell r hd" style="left:1082px;width:120px;top:907.25px;color:#000">0.00</div>
<div class="cell r hd" style="left:1455px;width:120px;top:907.25px;color:#000">0.00</div>
<div class="cell r hd" style="left:1588px;width:120px;top:907.25px;color:#000">0.00</div>
<div class="cell hd" style="left:556px;top:907.25px;color:#000">总合计：65项</div>
<div class="a" style="left:146px;top:896.3px;width:1px;height:48px;background:#e6e8eb"></div>
<div class="a" style="left:19px;top:932.2px;width:1697px;height:12.3px;background:#fafafa;border-top:1px solid #f0f0f0"></div>
<svg class="a" style="left:23px;top:935px" width="120" height="9" viewBox="0 0 120 9"><path d="M1 4.3L7 0.8V7.8Z" fill="#8a8a8a"/><path d="M117.5 4.3L111.5 0.8V7.8Z" fill="#8a8a8a"/></svg>
<svg class="a" style="left:151px;top:935px" width="9" height="9" viewBox="0 0 9 9"><path d="M1 4.3L7 0.8V7.8Z" fill="#8a8a8a"/></svg>
<div class="a" style="left:163.3px;top:936px;width:1037.5px;height:6px;border-radius:3px;background:#8c8c8c"></div>
<div class="a" style="left:146px;top:932.2px;width:1px;height:12.3px;background:#eee"></div>
<div class="a" style="left:19.5px;top:964.7px;line-height:20px;color:#444">已选1条</div>
<div class="a" style="left:88px;top:964.7px;line-height:20px;color:#3a7cf6">清空已选</div>
<div class="inp" style="left:163.3px;top:958.6px;width:253.3px;height:26px;line-height:27px;padding-left:5px;color:#222">xjxc<span style="position:absolute;right:6px;color:#888">3/4</span></div>
<div class="inp" style="left:425.5px;top:958.4px;width:59px;height:26.5px;line-height:30px;padding:0;text-align:center;color:#222;border-color:#ccc">上一个</div>
<div class="inp" style="left:494px;top:958.4px;width:59.4px;height:26.5px;line-height:30px;padding:0;text-align:center;color:#4a8af8;border-color:#5a95fa">下一个</div>
<div class="a" style="left:5px;top:998px;width:1711px;height:1px;background:#e5e5e5"></div>
<div class="inp" style="left:948px;top:1007px;width:60.8px;height:33px;line-height:34px;padding:0;text-align:center;color:#222;border-color:#ccc">取 消</div>
<div class="btn" style="left:1018px;top:1007px;width:61.2px;height:33px;line-height:36px">保 存</div>
</body></html>
